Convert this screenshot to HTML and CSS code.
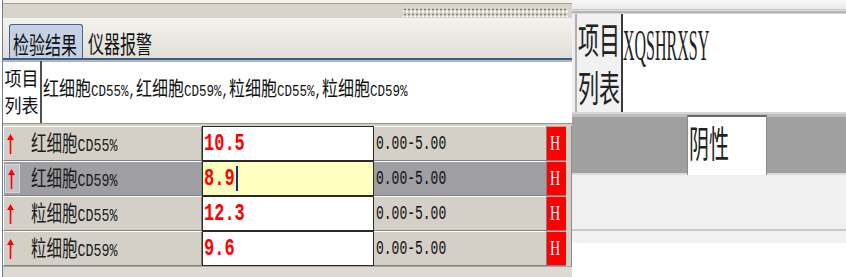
FILE: index.html
```html
<!DOCTYPE html>
<html lang="zh-CN">
<head>
  <meta charset="UTF-8" />
  <title>检验结果</title>
  <link rel="stylesheet" href="styles.css">
</head>
<body>
  <div class="screen">
    <div class="left">
      <div class="toolbar"><div class="grip"></div></div>
      <div class="tabs">
        <div class="tab active"><span class="tab-text">检验结果</span></div>
        <div class="tab"><span class="tab-text">仪器报警</span></div>
      </div>
      <div class="items">
        <div class="items-label"><span class="label-text">项目<br>列表</span></div>
        <div class="items-text"><span class="list-text">红细胞<span class="lat">CD55%,</span>红细胞<span class="lat">CD59%,</span>粒细胞<span class="lat">CD55%,</span>粒细胞<span class="lat">CD59%</span></span></div>
      </div>
      <div class="grid">
        <div class="row">
          <div class="name">
            <span class="mark"><svg class="arrow" width="7" height="20" viewBox="0 0 7 20"><path d="M3.5 0 L7 6 H4.3 V20 H2.7 V6 H0 Z" fill="#f00"/></svg></span>
            <span class="name-text">红细胞<span class="lat">CD55%</span></span>
          </div>
          <div class="value"><span class="value-text">10.5</span></div>
          <div class="range"><span class="range-text">0.00-5.00</span></div>
          <div class="flag"><span class="flag-text">H</span></div>
          <div class="filler"></div>
        </div>
        <div class="row selected">
          <div class="name">
            <span class="mark"><svg class="arrow" width="7" height="20" viewBox="0 0 7 20"><path d="M3.5 0 L7 6 H4.3 V20 H2.7 V6 H0 Z" fill="#f00"/></svg></span>
            <span class="name-text">红细胞<span class="lat">CD59%</span></span>
          </div>
          <div class="value"><span class="value-text">8.9</span><span class="caret"></span></div>
          <div class="range"><span class="range-text">0.00-5.00</span></div>
          <div class="flag"><span class="flag-text">H</span></div>
          <div class="filler"></div>
        </div>
        <div class="row">
          <div class="name">
            <span class="mark"><svg class="arrow" width="7" height="20" viewBox="0 0 7 20"><path d="M3.5 0 L7 6 H4.3 V20 H2.7 V6 H0 Z" fill="#f00"/></svg></span>
            <span class="name-text">粒细胞<span class="lat">CD55%</span></span>
          </div>
          <div class="value"><span class="value-text">12.3</span></div>
          <div class="range"><span class="range-text">0.00-5.00</span></div>
          <div class="flag"><span class="flag-text">H</span></div>
          <div class="filler"></div>
        </div>
        <div class="row">
          <div class="name">
            <span class="mark"><svg class="arrow" width="7" height="20" viewBox="0 0 7 20"><path d="M3.5 0 L7 6 H4.3 V20 H2.7 V6 H0 Z" fill="#f00"/></svg></span>
            <span class="name-text">粒细胞<span class="lat">CD59%</span></span>
          </div>
          <div class="value"><span class="value-text">9.6</span></div>
          <div class="range"><span class="range-text">0.00-5.00</span></div>
          <div class="flag"><span class="flag-text">H</span></div>
          <div class="filler"></div>
        </div>
      </div>
      <div class="foot"></div>
    </div>

    <div class="right">
      <div class="rtop"></div>
      <div class="rbox">
        <div class="rlabel">
          <span class="rlabel-line">项目</span>
          <span class="rlabel-line">列表</span>
        </div>
        <div class="rcode"><span class="rcode-text">XQSHRXSY</span></div>
      </div>
      <div class="rband">
        <div class="rcell"><span class="rcell-text">阴性</span></div>
      </div>
      <div class="rfoot"></div>
    </div>
  </div>
</body>
</html>
```

FILE: styles.css
```css
body {
  margin: 0;
  background: #fff;
  font-family: "Noto Sans CJK SC", sans-serif;
  color: #111;
  overflow: hidden;
}
.screen {
  display: flex;
  align-items: flex-start;
  width: 846px;
  height: 277px;
}
.lat {
  font-family: "Liberation Mono", monospace;
}

/* left window */
.left {
  margin-left: 2px;
  border-left: 1px solid #6e7e98;
  width: 569px;
  height: 277px;
  background: #d4d0c8;
  display: flex;
  flex-direction: column;
}
.toolbar {
  height: 18px;
  box-sizing: border-box;
  display: flex;
  background: linear-gradient(#f2f1ed 0 3px, #a3a098 3px 4px, #d8d4cc 4px);
}
.grip {
  margin: 7px 4px 0 auto;
  width: 165px;
  height: 10px;
  background-image:
    radial-gradient(circle, #858279 0.9px, transparent 1.2px),
    radial-gradient(circle, #fff 0.9px, transparent 1.2px);
  background-size: 4px 5px, 4px 5px;
  background-position: 0 0, 2px 2px;
}
.tabs {
  height: 42px;
  box-sizing: border-box;
  display: flex;
  align-items: flex-end;
  gap: 3px;
  padding-left: 6px;
  background: linear-gradient(#f4f3ee, #e1ded5);
  border-bottom: 2px solid #3d5a8a;
}
.tab {
  height: 34px;
  box-sizing: border-box;
  padding: 0 3px 0 2px;
  display: flex;
  align-items: center;
}
.tab.active {
  width: 74px;
  padding-left: 3px;
  background: #c6d1e3;
  border: 1px solid #48618e;
  border-bottom: none;
  border-radius: 3px 3px 0 0;
}
.tab-text {
  display: inline-block;
  font-size: 16px;
  line-height: 20px;
  transform: scaleY(1.5);
  margin-top: 2px;
}
.items {
  height: 64px;
  box-sizing: border-box;
  display: flex;
  background: #fff;
  border-top: 1px solid #aebcd4;
  box-shadow: inset 0 1px 0 #b2afa8;
  border-bottom: 1px solid #9a9890;
}
.items-label {
  width: 37px;
  border-right: 2px solid #505050;
  padding-top: 3px;
  text-align: center;
}
.label-text {
  display: inline-block;
  font-size: 17px;
  line-height: 24px;
  transform: scaleY(1.15);
  transform-origin: top;
}
.items-text {
  padding: 11px 0 0 1px;
}
.list-text {
  display: inline-block;
  font-size: 16px;
  line-height: 20px;
  transform: scaleY(1.3);
  transform-origin: top;
  white-space: nowrap;
}
.list-text .lat {
  font-size: 12.5px;
}

/* result rows */
.grid {
  padding-top: 2px;
}
.row {
  display: flex;
  height: 35px;
}
.row > div {
  box-sizing: border-box;
  display: flex;
  align-items: center;
}
.name {
  width: 199px;
  background: #d4d0c8;
  border-top: 1px solid #fff;
  border-left: 1px solid #fff;
  border-bottom: 1px solid #808080;
  border-right: 1px solid #808080;
}
.mark {
  width: 15px;
  height: 29px;
  margin-left: 1px;
  box-sizing: border-box;
  padding-left: 2px;
  display: flex;
  align-items: center;
}
.selected .mark {
  background: #c3c2c6;
  border: 1px solid #d8d8da;
}
.arrow {
  display: block;
}
.name-text {
  margin-left: 11px;
  display: inline-block;
  font-size: 15.5px;
  line-height: 20px;
  transform: scaleY(1.4);
  color: #1a1a1a;
}
.name-text .lat {
  font-size: 13.3px;
}
.value {
  width: 172px;
  background: #fff;
  border: 1px solid #2a2a2a;
  padding-left: 1px;
}
.value-text {
  display: inline-block;
  font-family: "Liberation Mono", monospace;
  font-weight: bold;
  font-size: 17px;
  color: #f00;
  transform: scaleY(1.45);
}
.caret {
  display: inline-block;
  width: 2px;
  height: 25px;
  margin-left: 1px;
  background: #1c2a66;
}
.range {
  width: 172px;
  background: #d4d0c8;
  border-top: 1px solid #fff;
  border-bottom: 1px solid #808080;
  padding-left: 2px;
}
.range-text {
  display: inline-block;
  font-family: "Liberation Mono", monospace;
  font-size: 13px;
  color: #111;
  transform: scaleY(1.6);
}
.selected .name,
.selected .range {
  background: #9f9ea3;
}
.selected .value {
  background: #ffffc0;
}
.flag {
  width: 20px;
  background: #f00;
  border-top: 1px solid #d8a0a0;
  border-bottom: 1px solid #808080;
  border-left: 1px solid #808080;
  padding-left: 3px;
}
.flag-text {
  display: inline-block;
  font-family: "Liberation Serif", serif;
  font-size: 14px;
  color: #fff;
  transform: scaleY(1.45);
}
.filler {
  flex: 1;
  background: #d4d0c8;
  border-right: 1px solid #8e8c86;
}
.foot {
  flex: 1;
  background: #dedad3;
  border-top: 1px solid #a8a59e;
}

/* right window */
.right {
  width: 274px;
  height: 243px;
  display: flex;
  flex-direction: column;
  background: #f0f0f0;
}
.rtop {
  height: 14px;
  background: linear-gradient(#f7f7f7 0, #ebebeb 9px, #c6c6c6 9px 10px, #e2e2e2 10px 11px, #b4b4b4 11px 13px, #d8d8d8 13px);
}
.rbox {
  height: 98px;
  margin-left: 3px;
  display: flex;
  background: #fff;
  border-left: 2px solid #b0b0b0;
}
.rlabel {
  width: 46px;
  flex: none;
  box-sizing: border-box;
  padding-top: 12px;
  display: flex;
  flex-direction: column;
  gap: 24px;
  background: #f1f1f1;
  border-right: 2px solid #3a3a3a;
}
.rlabel-line {
  display: block;
  height: 24px;
  padding-left: 1px;
  font-size: 21px;
  line-height: 24px;
  white-space: nowrap;
  color: #222;
  transform: scaleY(1.75);
}
.rcode-text {
  display: inline-block;
  margin-top: -1px;
  font-family: "Liberation Serif", serif;
  font-size: 16px;
  line-height: 20px;
  color: #222;
  transform: scaleY(2.8);
  transform-origin: top;
}
.rband {
  height: 63px;
  display: flex;
  background: linear-gradient(#d6d6d6 0 2px, #bdbdbd 2px 5px, #a0a0a0 5px 61px, #dcdcdc 61px);
}
.rcell {
  margin: 3px 0 0 115px;
  width: 80px;
  box-sizing: border-box;
  background: #fff;
  border-top: 2px solid #6a6a6a;
  border-left: 1px solid #8a8a8a;
  border-right: 1px solid #8a8a8a;
  padding: 4px 0 0 1px;
}
.rcell-text {
  display: inline-block;
  font-size: 20px;
  line-height: 24px;
  color: #222;
  transform: scaleY(1.85);
  transform-origin: top;
}
.rfoot {
  flex: 1;
  background: linear-gradient(#f0f0f0 0 54px, #c8c8c8 54px 56px, #f2f2f2 56px);
}
```
